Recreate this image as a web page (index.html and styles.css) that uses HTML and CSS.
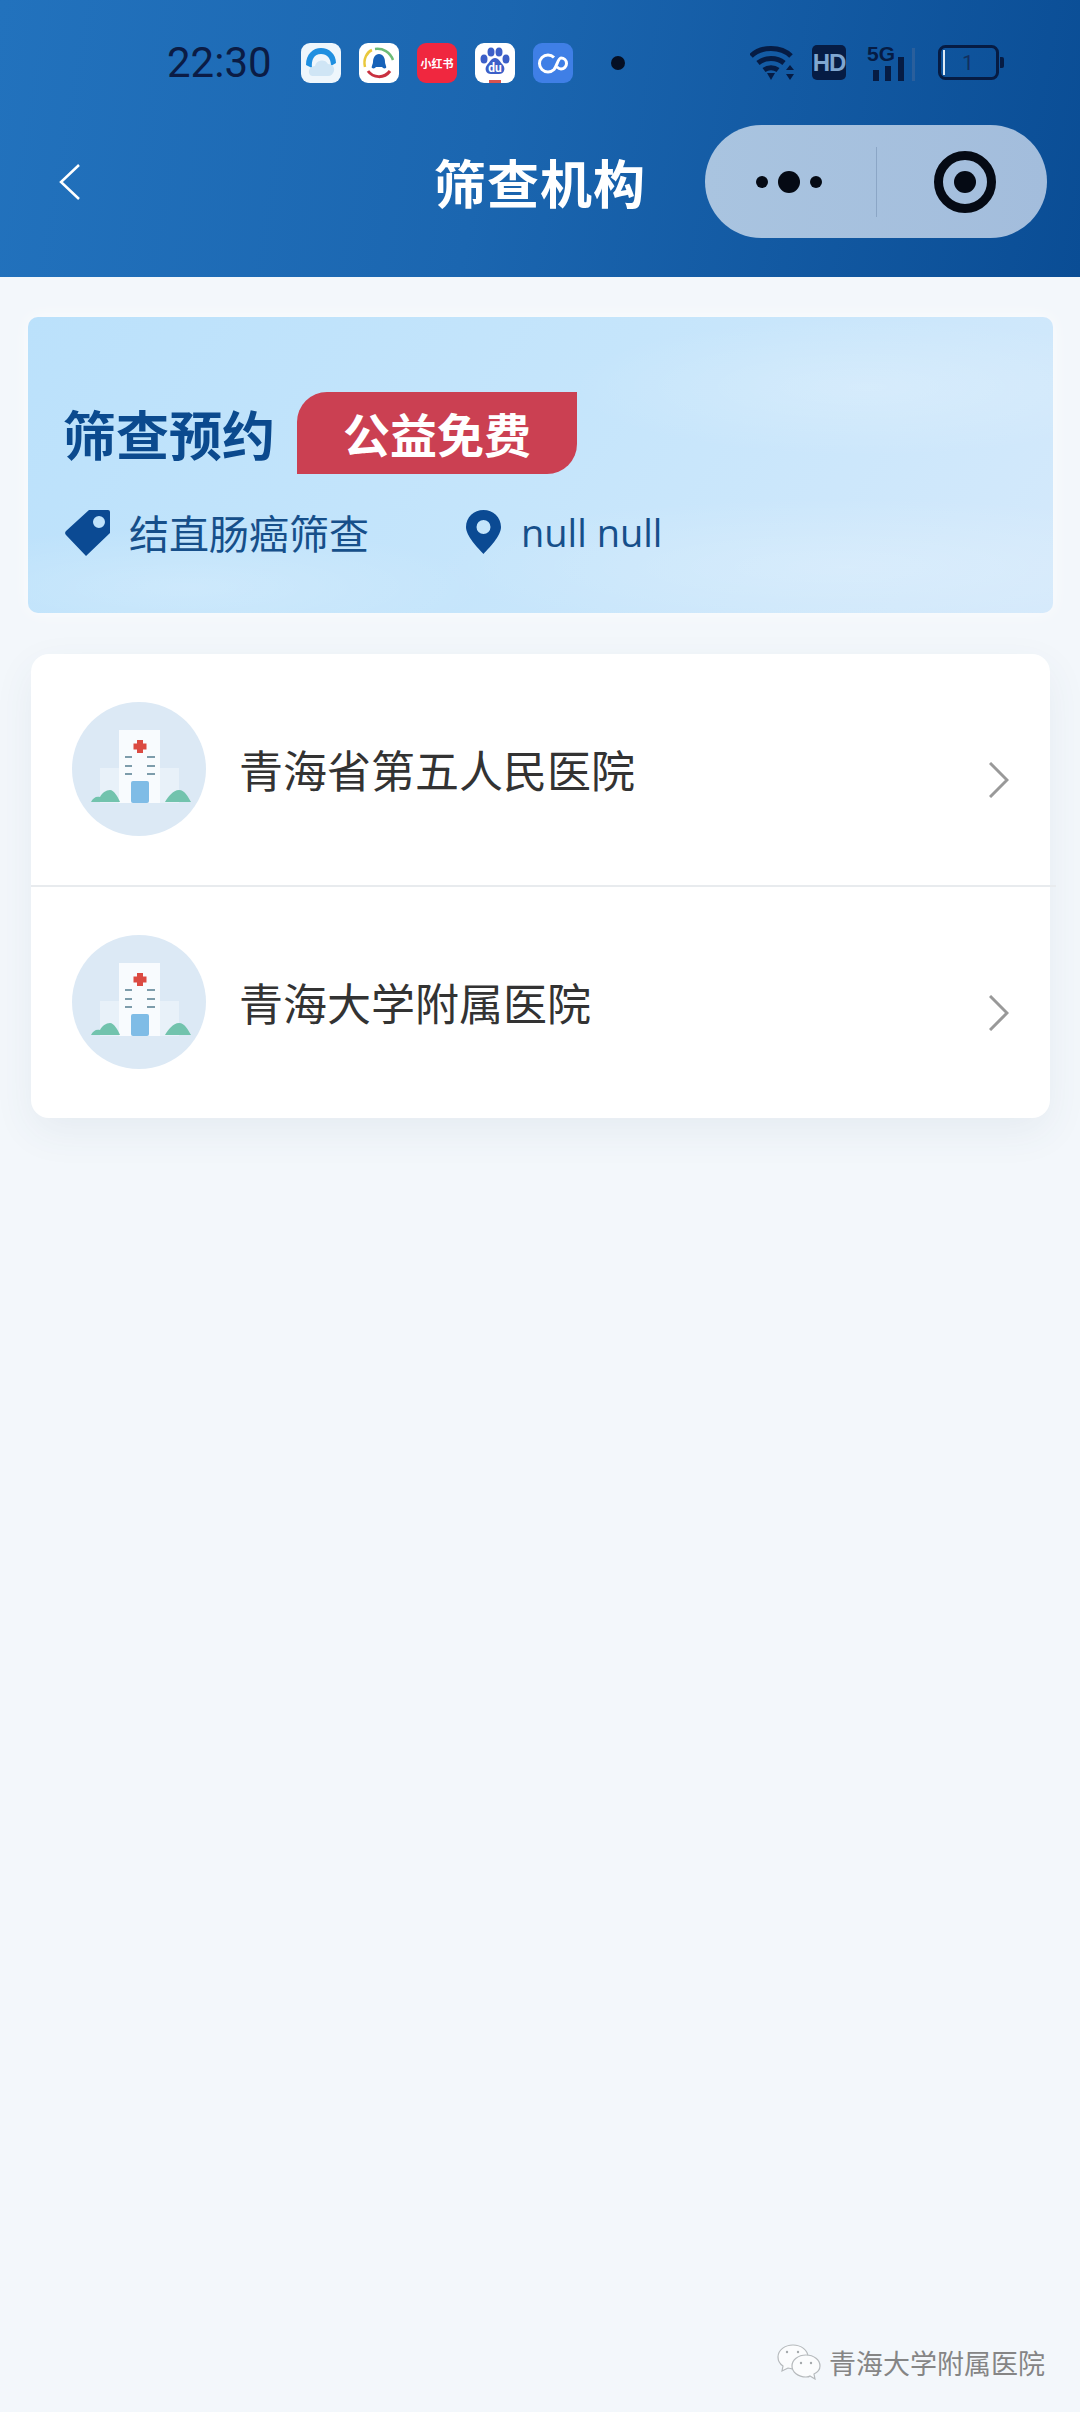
FILE: index.html
```html
<!DOCTYPE html>
<html lang="zh-CN">
<head>
    <meta charset="UTF-8">
    <meta name="viewport" content="width=device-width, initial-scale=1.0">
    <title>筛查机构</title>
    <link rel="stylesheet" href="styles.css">
</head>
<body>

    <svg class="defs" width="0" height="0">
        <symbol id="hospital" viewBox="0 0 134 134">
            <circle cx="67" cy="67" r="67" fill="#dce9f5"/>
            <rect x="28" y="66" width="19" height="35" fill="#e8f1f9"/>
            <rect x="88" y="66" width="19" height="35" fill="#e8f1f9"/>
            <rect x="47" y="28" width="41" height="73" fill="#f8fbfe"/>
            <path d="M65 38h6v3.500h3.500v6h-3.500v3.500h-6v-3.500h-3.500v-6h3.500z" fill="#db4a42"/>
            <path d="M53 55h7M75 55h8M53 64h7M75 64h8M53 72h7M75 72h8" stroke="#7d9cab" stroke-width="2"/>
            <rect x="59" y="79" width="18" height="22" rx="2" fill="#7fbce6"/>
            <path d="M19 100c2-4 5-6 9-5 2-4 6-7 10-7s8 7 10 12z" fill="#72c3ad"/>
            <path d="M93 100c3-5 8-12 14-12s9 7 12 12z" fill="#72c3ad"/>
        </symbol>
    </svg>

    <header class="top">
        <div class="status">
            <span class="time">22:30</span>
            <div class="apps">
                <svg class="app" viewBox="0 0 40 40">
                    <rect width="40" height="40" rx="9" fill="#eef6fc"/>
                    <path d="M5 22C5 11 12 5 20 5s15 6 15 15l-5 3c0-8-4-12-10-12-7 0-10 6-9 14z" fill="#1f8fe0"/>
                    <path d="M9 32c-3-5 1-9 5-9 1-6 10-8 13-2 4 0 7 3 6 7-1 3-3 5-6 5H14c-2 0-4 0-5-1z" fill="#cfe5f5"/>
                </svg>
                <svg class="app" viewBox="0 0 40 40">
                    <rect width="40" height="40" rx="9" fill="#fff"/>
                    <path d="M6 24C4 16 8 9 13 7" fill="none" stroke="#e9c83c" stroke-width="2.500"/>
                    <path d="M16 6c8-1 15 3 18 11" fill="none" stroke="#6cbb78" stroke-width="2.500"/>
                    <path d="M9 28c5 7 16 8 22 0" fill="none" stroke="#c9303f" stroke-width="3"/>
                    <path d="M20 11c4 0 6 4 6 8 0 2 2 5 1 6-2 1-3 0-4-1h-6c-1 1-2 2-4 1-1-1 1-4 1-6 0-4 2-8 6-8z" fill="#1762b8"/>
                </svg>
                <div class="app app-red">小红书</div>
                <svg class="app" viewBox="0 0 40 40">
                    <rect width="40" height="40" rx="9" fill="#fff"/>
                    <ellipse cx="9" cy="16" rx="3.500" ry="4.500" fill="#3c5fc8"/>
                    <ellipse cx="16" cy="9" rx="3.500" ry="4.500" fill="#3c5fc8"/>
                    <ellipse cx="24" cy="9" rx="3.500" ry="4.500" fill="#3c5fc8"/>
                    <ellipse cx="31" cy="16" rx="3.500" ry="4.500" fill="#3c5fc8"/>
                    <path d="M20 15c4 0 5 4 8 7 3 4 1 9-4 9h-8c-5 0-7-5-4-9 3-3 4-7 8-7z" fill="#3c5fc8"/>
                    <text class="app-du" x="20" y="29" text-anchor="middle">du</text>
                    <rect x="14" y="37" width="12" height="3" fill="#d9534f"/>
                </svg>
                <svg class="app" viewBox="0 0 40 40">
                    <rect width="40" height="40" rx="9" fill="#3f7fe6"/>
                    <path d="M21 14.500A8.500 8.500 0 1 0 21 26.500C24 23 25 15 28 15A5.500 5.500 0 1 1 28 26C26.500 26 25 25 24 24" fill="none" stroke="#fff" stroke-width="3"/>
                </svg>
            </div>
            <span class="status-dot"></span>
            <div class="sys">
                <svg class="wifi" viewBox="0 0 45 35">
                    <g fill="none" stroke="#061c44" stroke-width="5">
                        <path d="M1 11C11 1 31 1 41 11"/>
                        <path d="M8 18c7-6 19-6 26 0"/>
                        <path d="M14 25c4-3 10-3 14 0"/>
                    </g>
                    <path d="M17 28h8l-4 7z" fill="#061c44"/>
                    <path d="M40 20l4 5h-8zM40 35l4-6h-8z" fill="#061c44"/>
                </svg>
                <div class="hd">HD</div>
                <svg class="signal" viewBox="0 -6 49 42">
                    <text class="signal-text" x="0" y="16">5G</text>
                    <rect x="6" y="25" width="6" height="11" fill="#061c44"/>
                    <rect x="18" y="21" width="6" height="15" fill="#061c44"/>
                    <rect x="31" y="12" width="6" height="24" fill="#061c44"/>
                    <rect x="45" y="3" width="3" height="33" fill="#2a5f9c"/>
                </svg>
                <svg class="battery" viewBox="0 0 66 35">
                    <rect x="1.500" y="1.500" width="58" height="32" rx="6" fill="none" stroke="#061c44" stroke-width="3"/>
                    <rect x="5" y="5" width="2" height="25" fill="#dfeaf5"/>
                    <path d="M62 12h2a2 2 0 0 1 2 2v7a2 2 0 0 1-2 2h-2z" fill="#061c44"/>
                    <text class="battery-text" x="30" y="25" text-anchor="middle">1</text>
                </svg>
            </div>
        </div>
        <nav class="nav">
            <svg class="back" viewBox="0 0 21 36">
                <path d="M20 1L2 18l18 17" fill="none" stroke="#fff" stroke-width="2.500"/>
            </svg>
            <h1 class="nav-title">筛查机构</h1>
            <div class="capsule">
                <div class="capsule-more">
                    <i class="dot"></i><i class="dot dot-big"></i><i class="dot"></i>
                </div>
                <div class="capsule-line"></div>
                <div class="capsule-target"><i></i></div>
            </div>
        </nav>
    </header>

    <section class="banner">
        <div class="banner-head">
            <h2 class="banner-title">筛查预约</h2>
            <span class="badge">公益免费</span>
        </div>
        <div class="banner-meta">
            <div class="meta-item meta-project">
                <svg class="icon-tag" viewBox="0 0 45 47">
                    <path d="M24 1h19a2 2 0 0 1 2 2v21L21 47 1 26a3 3 0 0 1 0-4zm10 6a6 6 0 1 0 0 12 6 6 0 0 0 0-12z" fill="#0b4a93" fill-rule="evenodd"/>
                </svg>
                <span>结直肠癌筛查</span>
            </div>
            <div class="meta-item">
                <svg class="icon-pin" viewBox="0 0 35 44">
                    <path d="M17.500 0C8 0 0 7 0 17c0 9 12 21 17.500 27C23 38 35 26 35 17 35 7 27 0 17.500 0zm0 10a7 7 0 1 1 0 14 7 7 0 0 1 0-14z" fill="#0b4a93" fill-rule="evenodd"/>
                </svg>
                <span class="meta-latin">null null</span>
            </div>
        </div>
    </section>

    <section class="orgs">
        <div class="org-row">
            <svg class="org-avatar"><use href="#hospital"/></svg>
            <span class="org-name">青海省第五人民医院</span>
            <svg class="org-arrow" viewBox="0 0 20 36">
                <path d="M1 1l17 17L1 35" fill="none" stroke="#999" stroke-width="3"/>
            </svg>
        </div>
        <div class="org-line"></div>
        <div class="org-row">
            <svg class="org-avatar"><use href="#hospital"/></svg>
            <span class="org-name">青海大学附属医院</span>
            <svg class="org-arrow" viewBox="0 0 20 36">
                <path d="M1 1l17 17L1 35" fill="none" stroke="#999" stroke-width="3"/>
            </svg>
        </div>
    </section>

    <footer class="mark">
        <svg class="mark-icon" viewBox="0 0 44 36">
            <g fill="#fbfcfd" stroke="#b5b9bc" stroke-width="1.200">
                <path d="M16 1C8 1 1 6 1 13c0 4 2 7 5 9l-1 5 6-3c2 0 3 1 5 1 8 0 15-5 15-12S24 1 16 1z"/>
                <path d="M29 11c-8 0-14 5-14 11s6 11 14 11c1 0 3 0 4-1l5 3-1-5c4-2 6-5 6-8 0-6-6-11-14-11z"/>
            </g>
            <g fill="#a5a9ad">
                <circle cx="10" cy="8" r="1.200"/>
                <circle cx="21" cy="8" r="1.200"/>
                <circle cx="24" cy="19" r="1.200"/>
                <circle cx="34" cy="19" r="1.200"/>
            </g>
        </svg>
        <span>青海大学附属医院</span>
    </footer>

</body>
</html>
```

FILE: styles.css
```css
body {
    margin: 0;
    height: 100vh;
    display: flex;
    flex-direction: column;
    overflow: hidden;
    background-color: #f3f7fb;
    font-family: "Noto Sans CJK SC", Roboto, sans-serif;
}
.defs {
    position: absolute;
}

/* header */
.top {
    height: 277px;
    flex-shrink: 0;
    background: linear-gradient(100deg, #2272bd 0%, #1b66b0 45%, #0a4d95 100%);
}
.status {
    height: 125px;
    display: flex;
    align-items: center;
    padding-left: 167px;
    box-sizing: border-box;
}
.time {
    width: 103px;
    font-family: Roboto, sans-serif;
    font-size: 42px;
    color: #0b1c45;
}
.apps {
    display: flex;
    gap: 18px;
    margin-left: 31px;
}
.app {
    display: block;
    width: 40px;
    height: 40px;
}
.app-red {
    border-radius: 9px;
    background-color: #f0273f;
    color: #fff;
    font-size: 11px;
    font-weight: 700;
    line-height: 40px;
    text-align: center;
    white-space: nowrap;
}
.app-du {
    font-family: Roboto, sans-serif;
    font-size: 12px;
    font-weight: 700;
    fill: #fff;
}
.status-dot {
    width: 14px;
    height: 14px;
    margin-left: 38px;
    border-radius: 50%;
    background-color: #050f24;
}
.sys {
    display: flex;
    align-items: center;
    margin-left: 125px;
}
.wifi {
    width: 45px;
    height: 35px;
}
.hd {
    width: 34px;
    height: 35px;
    margin-left: 17px;
    border-radius: 5px;
    background-color: #061c44;
    color: #7fa6d0;
    font-family: "Liberation Sans Narrow", "Liberation Sans", sans-serif;
    font-size: 24px;
    font-weight: 700;
    line-height: 35px;
    text-align: center;
    letter-spacing: -1px;
}
.signal {
    width: 49px;
    height: 42px;
    margin: -6px 0 0 21px;
}
.signal-text {
    font-family: "Liberation Sans Narrow", "Liberation Sans", sans-serif;
    font-size: 21px;
    font-weight: 700;
    fill: #061c44;
}
.battery {
    width: 66px;
    height: 35px;
    margin-left: 22px;
}
.battery-text {
    font-family: Roboto, sans-serif;
    font-size: 21px;
    fill: #12305f;
}

.nav {
    display: grid;
    grid-template-columns: 1fr auto 1fr;
    align-items: center;
    height: 113px;
}
.back {
    width: 21px;
    height: 36px;
    margin-left: 59px;
}
.nav-title {
    margin: 0;
    color: #fff;
    font-size: 52px;
    font-weight: 700;
    line-height: 1;
    letter-spacing: 1px;
}
.capsule {
    justify-self: end;
    display: flex;
    align-items: center;
    width: 342px;
    height: 113px;
    margin-right: 33px;
    border-radius: 57px;
    background: linear-gradient(90deg, #a9c4e0, #a3bddc);
}
.capsule-more {
    display: flex;
    align-items: center;
    gap: 10px;
    margin-left: 51px;
    width: 120px;
}
.dot {
    display: block;
    width: 12px;
    height: 12px;
    border-radius: 50%;
    background-color: #050a14;
}
.dot-big {
    width: 22px;
    height: 22px;
}
.capsule-line {
    width: 1px;
    height: 70px;
    background-color: #8ba6c6;
}
.capsule-target {
    display: flex;
    align-items: center;
    justify-content: center;
    width: 62px;
    height: 62px;
    margin-left: 57px;
    box-sizing: border-box;
    border: 9px solid #050a14;
    border-radius: 50%;
}
.capsule-target i {
    width: 22px;
    height: 22px;
    border-radius: 50%;
    background-color: #050a14;
}

/* banner */
.banner {
    height: 296px;
    margin: 40px 27px 0 28px;
    padding: 75px 0 0 37px;
    box-sizing: border-box;
    border-radius: 10px;
    box-shadow: 0 0 18px rgba(255,255,255,0.7);
    background:
        radial-gradient(ellipse 300px 70px at 840px 70px, rgba(255,255,255,0.2), rgba(255,255,255,0)),
        radial-gradient(ellipse 420px 70px at 820px 250px, rgba(255,255,255,0.2), rgba(255,255,255,0)),
        radial-gradient(ellipse 300px 60px at 160px 270px, rgba(255,255,255,0.2), rgba(255,255,255,0)),
        linear-gradient(125deg, #bbe1fb 0%, #c5e5fb 50%, #d4e9fb 100%);
}
.banner-head {
    display: flex;
    align-items: center;
    height: 82px;
}
.banner-title {
    width: 234px;
    margin: 0 0 0 -2px;
    color: #0b4a8e;
    font-size: 53px;
    font-weight: 700;
    line-height: 1;
}
.badge {
    width: 280px;
    height: 82px;
    border-radius: 30px 0 30px 0;
    background-color: #cb4052;
    color: #fff;
    font-size: 47px;
    font-weight: 700;
    line-height: 82px;
    text-align: center;
}
.banner-meta {
    display: flex;
    align-items: center;
    height: 46px;
    margin-top: 35px;
    color: #164f8a;
    font-size: 40px;
}
.meta-item {
    display: flex;
    align-items: center;
}
.meta-project {
    width: 401px;
}
.icon-tag {
    width: 45px;
    height: 47px;
    margin-right: 19px;
}
.icon-pin {
    width: 35px;
    height: 44px;
    margin-right: 20px;
}
.meta-latin {
    font-family: "Open Sans", sans-serif;
    font-size: 38px;
}

/* hospital list */
.orgs {
    margin: 41px 30px 0 31px;
    border-radius: 18px;
    background-color: #fff;
    box-shadow: 0 14px 40px rgba(60,80,110,0.07);
}
.org-row {
    display: flex;
    align-items: center;
    height: 232px;
    padding: 48px 41px 50px;
    box-sizing: border-box;
}
.org-row:last-child {
    height: 231px;
    padding-bottom: 49px;
}
.org-avatar {
    width: 134px;
    height: 134px;
    flex-shrink: 0;
}
.org-name {
    margin-left: 33px;
    color: #333;
    font-size: 44px;
}
.org-arrow {
    width: 20px;
    height: 36px;
    margin: 22px 0 0 auto;
}
.org-line {
    height: 2px;
    margin: -1px -6px 0 0;
    background-color: #e8ebee;
}

/* watermark */
.mark {
    display: flex;
    align-items: center;
    justify-content: flex-end;
    margin-top: auto;
    padding: 0 35px 32px 0;
    color: #858585;
    font-size: 27px;
    line-height: 35px;
}
.mark-icon {
    width: 44px;
    height: 36px;
    margin-right: 8px;
}
```
